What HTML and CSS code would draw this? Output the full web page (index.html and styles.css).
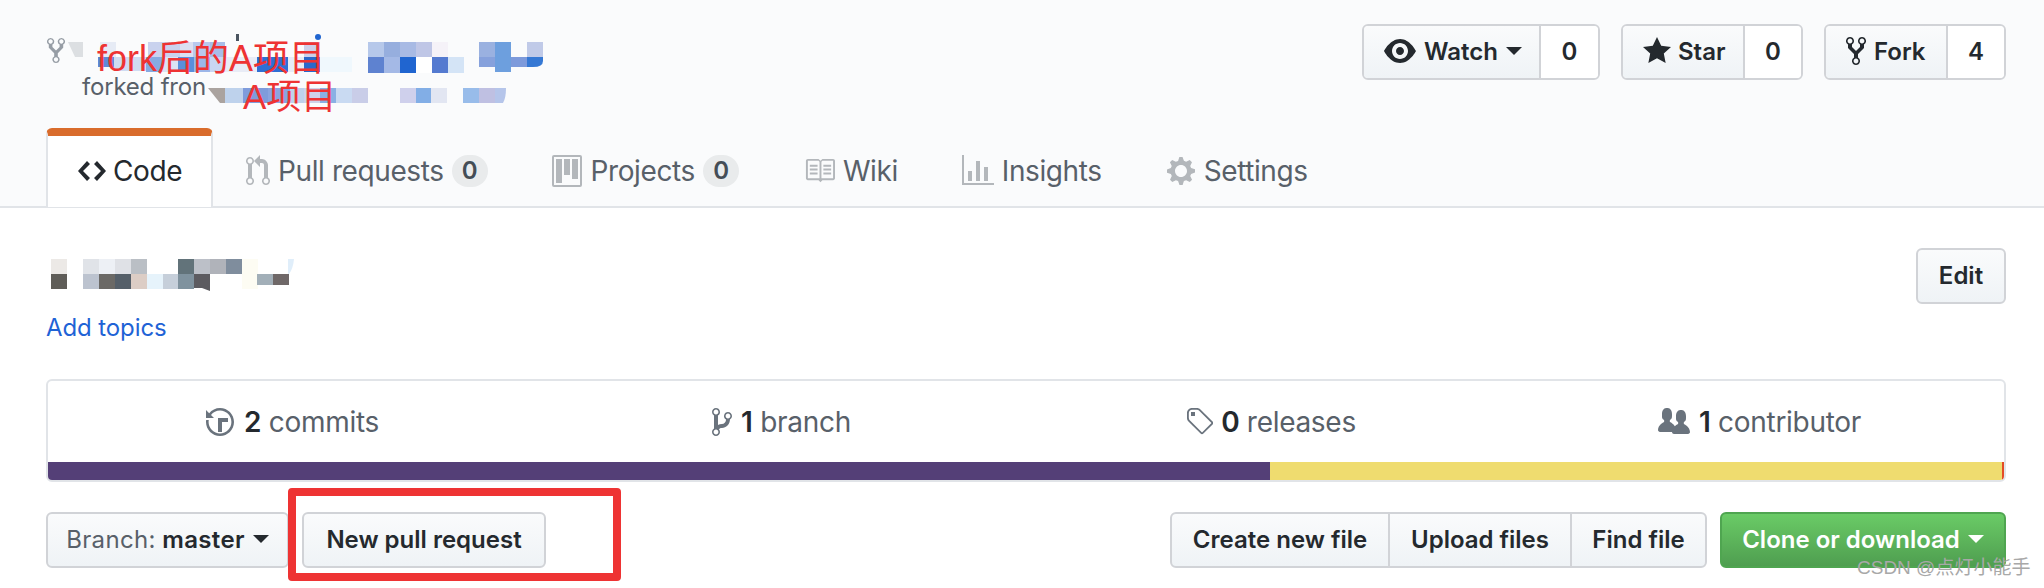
FILE: index.html
```html
<!DOCTYPE html>
<html lang="en">
<head>
<meta charset="utf-8">
<title>Repository</title>
<link rel="stylesheet" href="styles.css">
</head>
<body>
<header class="pagehead">
  <div class="head-top">
    <div class="repo-title">
      <svg class="ico-repo" viewBox="0 0 10 16"><path d="M8 1a1.993 1.993 0 0 0-1 3.72V6L5 8 3 6V4.72A1.993 1.993 0 0 0 2 1a1.993 1.993 0 0 0-1 3.72V6.5l3 3v1.78A1.993 1.993 0 0 0 5 15a1.993 1.993 0 0 0 1-3.72V9.5l3-3V4.72A1.993 1.993 0 0 0 8 1zM2 4.2C1.34 4.2.8 3.65.8 3c0-.65.55-1.2 1.2-1.2.65 0 1.2.55 1.2 1.2 0 .65-.55 1.2-1.2 1.2zm3 10c-.66 0-1.2-.55-1.2-1.2 0-.65.55-1.2 1.2-1.2.65 0 1.2.55 1.2 1.2 0 .65-.55 1.2-1.2 1.2zm3-10c-.66 0-1.2-.55-1.2-1.2 0-.65.55-1.2 1.2-1.2.65 0 1.2.55 1.2 1.2 0 .65-.55 1.2-1.2 1.2z"/></svg>
      <span class="forked">forked fron</span>
    </div>
    <div class="actions">
      <div class="counter-btn">
        <span class="btn-main btn-watch"><svg class="ico-eye" viewBox="0 0 16 16"><path d="M8.06 2C3 2 0 8 0 8s3 6 8.06 6C13 14 16 8 16 8s-3-6-7.94-6zM8 12c-2.2 0-4-1.78-4-4 0-2.2 1.8-4 4-4 2.22 0 4 1.8 4 4 0 2.22-1.78 4-4 4zm2-4c0 1.11-.89 2-2 2-1.11 0-2-.89-2-2 0-1.11.89-2 2-2 1.11 0 2 .89 2 2z"/></svg>Watch<i class="caret"></i></span>
        <span class="btn-count">0</span>
      </div>
      <div class="counter-btn">
        <span class="btn-main btn-star"><svg class="ico-star" viewBox="0 0 14 16"><path d="M14 6l-4.9-.64L7 1 4.9 5.36 0 6l3.6 3.26L2.67 14 7 11.67 11.33 14l-.93-4.74L14 6z"/></svg>Star</span>
        <span class="btn-count btn-count-star">0</span>
      </div>
      <div class="counter-btn">
        <span class="btn-main btn-fork"><svg class="ico-fork" viewBox="0 0 10 16"><path d="M8 1a1.993 1.993 0 0 0-1 3.72V6L5 8 3 6V4.72A1.993 1.993 0 0 0 2 1a1.993 1.993 0 0 0-1 3.72V6.5l3 3v1.78A1.993 1.993 0 0 0 5 15a1.993 1.993 0 0 0 1-3.72V9.5l3-3V4.72A1.993 1.993 0 0 0 8 1zM2 4.2C1.34 4.2.8 3.65.8 3c0-.65.55-1.2 1.2-1.2.65 0 1.2.55 1.2 1.2 0 .65-.55 1.2-1.2 1.2zm3 10c-.66 0-1.2-.55-1.2-1.2 0-.65.55-1.2 1.2-1.2.65 0 1.2.55 1.2 1.2 0 .65-.55 1.2-1.2 1.2zm3-10c-.66 0-1.2-.55-1.2-1.2 0-.65.55-1.2 1.2-1.2.65 0 1.2.55 1.2 1.2 0 .65-.55 1.2-1.2 1.2z"/></svg>Fork</span>
        <span class="btn-count btn-count-fork">4</span>
      </div>
    </div>
  </div>
  <nav class="tabs">
    <span class="tab tab-active"><svg class="ico-code" viewBox="0 0 14 16"><path d="M9.5 3L8 4.5 11.5 8 8 11.5 9.5 13 14 8 9.5 3zm-5 0L0 8l4.5 5L6 11.5 2.5 8 6 4.5 4.5 3z"/></svg>Code</span>
    <span class="tab tab-pr"><svg class="ico-pr" viewBox="0 0 12 16"><path d="M11 11.28V5c-.03-.78-.34-1.47-.94-2.06C9.46 2.35 8.78 2.03 8 2H7V0L4 3l3 3V4h1c.27.02.48.11.69.31.21.2.3.42.31.69v6.28A1.993 1.993 0 0 0 10 15a1.993 1.993 0 0 0 1-3.72zm-1 2.92c-.66 0-1.2-.55-1.2-1.2 0-.65.55-1.2 1.2-1.2.65 0 1.2.55 1.2 1.2 0 .65-.55 1.2-1.2 1.2zM4 3c0-1.11-.89-2-2-2a1.993 1.993 0 0 0-1 3.72v6.56A1.993 1.993 0 0 0 2 15a1.993 1.993 0 0 0 1-3.72V4.72c.59-.34 1-.98 1-1.72zm-.8 10c0 .66-.55 1.2-1.2 1.2-.65 0-1.2-.55-1.2-1.2 0-.65.55-1.2 1.2-1.2.65 0 1.2.55 1.2 1.2zM2 4.2C1.34 4.2.8 3.65.8 3c0-.65.55-1.2 1.2-1.2.65 0 1.2.55 1.2 1.2 0 .65-.55 1.2-1.2 1.2z"/></svg>Pull requests<b class="pill">0</b></span>
    <span class="tab tab-projects"><svg class="ico-project" viewBox="0 0 15 16"><path fill-rule="evenodd" d="M10 12h3V2h-3v10zm-4-2h3V2H6v8zm-4 4h3V2H2v12zm-1 1h13V1H1v14zM14 0H1a1 1 0 0 0-1 1v14a1 1 0 0 0 1 1h13a1 1 0 0 0 1-1V1a1 1 0 0 0-1-1z"/></svg>Projects<b class="pill">0</b></span>
    <span class="tab tab-wiki"><svg class="ico-book" viewBox="0 0 16 16"><path d="M3 5h4v1H3V5zm0 3h4V7H3v1zm0 2h4V9H3v1zm11-5h-4v1h4V5zm0 2h-4v1h4V7zm0 2h-4v1h4V9zm2-6v9c0 .55-.45 1-1 1H9.5l-1 1-1-1H2c-.55 0-1-.45-1-1V3c0-.55.45-1 1-1h5.5l1 1 1-1H15c.55 0 1 .45 1 1zm-8 .5L7.5 3H2v9h6V3.5zm7-.5H9.5l-.5.5V12h6V3z"/></svg>Wiki</span>
    <span class="tab tab-insights"><svg class="ico-graph" viewBox="0 0 16 16"><path d="M16 14v1H0V0h1v14h15zM5 13H3V8h2v5zm4 0H7V3h2v10zm4 0h-2V6h2v7z"/></svg>Insights</span>
    <span class="tab tab-settings"><svg class="ico-gear" viewBox="0 0 14 16"><path d="M14 8.77v-1.6l-1.94-.64-.45-1.09.88-1.84-1.13-1.13-1.81.91-1.09-.45-.69-1.92h-1.6l-.63 1.94-1.11.45-1.84-.88-1.13 1.13.91 1.81-.45 1.09L0 7.23v1.59l1.94.64.45 1.09-.88 1.84 1.13 1.13 1.81-.91 1.09.45.69 1.92h1.59l.63-1.94 1.11-.45 1.84.88 1.13-1.13-.92-1.81.47-1.09L14 8.75v.02zM7 11c-1.66 0-3-1.34-3-3s1.34-3 3-3 3 1.34 3 3-1.34 3-3 3z"/></svg>Settings</span>
  </nav>
</header>

<main class="content">
  <section class="meta">
    <div class="meta-text">
      <div class="desc-space"></div>
      <a class="topics">Add topics</a>
    </div>
    <span class="btn btn-edit">Edit</span>
  </section>

  <section class="summary">
    <ul class="stats">
      <li><svg class="ico-history" viewBox="0 0 14 16"><path d="M8 13H6V6h5v2H8v5zM7 1C4.81 1 2.87 2.02 1.59 3.59L0 2v4h4L2.5 4.5C3.55 3.17 5.17 2.3 7 2.3c3.14 0 5.7 2.56 5.7 5.7s-2.56 5.7-5.7 5.7A5.71 5.71 0 0 1 1.3 8c0-.34.03-.67.09-1H.08C.03 7.33 0 7.66 0 8c0 3.86 3.14 7 7 7s7-3.14 7-7-3.14-7-7-7z"/></svg><b>2</b> commits</li>
      <li><svg class="ico-branch" viewBox="0 0 10 16"><path d="M10 5c0-1.11-.89-2-2-2a1.993 1.993 0 0 0-1 3.72v.3c-.02.52-.23.98-.63 1.38-.4.4-.86.61-1.38.63-.83.02-1.48.16-2 .45V4.72a1.993 1.993 0 0 0-1-3.72C.88 1 0 1.89 0 3a2 2 0 0 0 1 1.72v6.56c-.59.35-1 .99-1 1.72 0 1.11.89 2 2 2 1.11 0 2-.89 2-2 0-.53-.2-1-.53-1.36.09-.06.48-.41.59-.47.25-.11.56-.17.94-.17 1.05-.05 1.95-.45 2.75-1.25S8.95 7.77 9 6.73h-.02C9.59 6.37 10 5.73 10 5zM2 1.8c.66 0 1.2.55 1.2 1.2 0 .65-.55 1.2-1.2 1.2C1.35 4.2.8 3.65.8 3c0-.65.55-1.2 1.2-1.2zm0 12.41c-.66 0-1.2-.55-1.2-1.2 0-.65.55-1.2 1.2-1.2.65 0 1.2.55 1.2 1.2 0 .65-.55 1.2-1.2 1.2zm6-8c-.66 0-1.2-.55-1.2-1.2 0-.65.55-1.2 1.2-1.2.65 0 1.2.55 1.2 1.2 0 .65-.55 1.2-1.2 1.2z"/></svg><b>1</b> branch</li>
      <li><svg class="ico-tag" viewBox="0 0 14 16"><path d="M7.73 1.73C7.26 1.26 6.62 1 5.96 1H3.5C2.13 1 1 2.13 1 3.5v2.47c0 .66.27 1.3.73 1.77l6.06 6.06c.39.39 1.02.39 1.41 0l4.59-4.59a.996.996 0 0 0 0-1.41L7.73 1.73zM2.38 7.09c-.31-.3-.47-.7-.47-1.13V3.5c0-.88.72-1.59 1.59-1.59h2.47c.42 0 .83.16 1.13.47l6.14 6.13-4.73 4.73-6.13-6.15zM3.01 3h2v2H3V3h.01z"/></svg><b>0</b> releases</li>
      <li><svg class="ico-org" viewBox="0 0 16 16"><path d="M16 12.999c0 .439-.45 1-1 1H7.995c-.539 0-.994-.447-.995-.999H1c-.54 0-1-.561-1-1 0-2.634 3-4 3-4s.229-.409 0-1c-.841-.621-1.058-.59-1-3 .058-2.419 1.367-3 2.5-3s2.442.58 2.5 3c.058 2.41-.159 2.379-1 3-.229.59 0 1 0 1s1.549.711 2.42 2.088C9.196 9.369 10 8.999 10 8.999s.229-.409 0-1c-.841-.62-1.058-.59-1-3 .058-2.419 1.367-3 2.5-3s2.437.581 2.495 3c.059 2.41-.158 2.38-1 3-.229.59 0 1 0 1s3.005 1.366 3.005 4z"/></svg><b>1</b> contributor</li>
    </ul>
    <div class="langbar"><span class="lang-a"></span><span class="lang-b"></span><span class="lang-c"></span></div>
  </section>

  <section class="filebar">
    <div class="file-left">
      <span class="btn btn-branch"><span class="muted">Branch:</span> master<i class="caret"></i></span>
      <span class="btn btn-pr">New pull request</span>
    </div>
    <div class="file-right">
      <div class="btn-group">
        <span class="btn btn-create">Create new file</span>
        <span class="btn btn-upload">Upload files</span>
        <span class="btn btn-find">Find file</span>
      </div>
      <span class="btn btn-clone">Clone or download<i class="caret"></i></span>
    </div>
  </section>
</main>

<svg class="mosaic" width="2044" height="300" viewBox="0 0 2044 300">
  <path fill="#dcdfe2" d="M68 42h15v15h-8z"/>
  <rect fill="#e6ebf5" x="100" y="42" width="16" height="15"/>
  <rect fill="#c9d2ee" x="148" y="42" width="32" height="15"/>
  <rect fill="#dbe0f2" x="180" y="42" width="32" height="15"/>
  <rect fill="#b9c9ee" x="193" y="42" width="17" height="15"/>
  <rect fill="#a8bde8" x="210" y="42" width="15" height="15"/>
  <rect fill="#e8ecf6" x="225" y="57" width="32" height="15"/>
  <rect fill="#5f8ad8" x="98" y="57" width="16" height="10"/>
  <rect fill="#cfdcf2" x="114" y="57" width="32" height="14"/>
  <rect fill="#86aae2" x="146" y="57" width="16" height="15"/>
  <rect fill="#dbe4f5" x="162" y="57" width="16" height="15"/>
  <rect fill="#5a8fdc" x="178" y="57" width="16" height="15"/>
  <rect fill="#9cb6e8" x="194" y="57" width="16" height="15"/>
  <rect fill="#c9d6f2" x="210" y="57" width="15" height="15"/>
  <rect fill="#2f6fd4" x="257" y="57" width="31" height="15"/>
  <rect fill="#e6ecf6" x="288" y="57" width="16" height="15"/>
  <rect fill="#cdd0ea" x="304" y="42" width="16" height="15"/>
  <rect fill="#2a68cc" x="304" y="57" width="16" height="15"/>
  <rect fill="#f0f8fd" x="320" y="57" width="32" height="15"/>
  <rect fill="#b6c8ea" x="368" y="42" width="16" height="15"/>
  <rect fill="#96aede" x="384" y="42" width="16" height="15"/>
  <rect fill="#a8bae4" x="400" y="42" width="16" height="15"/>
  <rect fill="#bfc6e6" x="416" y="42" width="16" height="15"/>
  <rect fill="#f5f2f8" x="432" y="42" width="16" height="15"/>
  <rect fill="#9ab1e0" x="479" y="42" width="16" height="15"/>
  <rect fill="#6d9fde" x="495" y="42" width="16" height="30"/>
  <rect fill="#c0cae8" x="527" y="42" width="16" height="15"/>
  <rect fill="#5e82d0" x="368" y="57" width="16" height="16"/>
  <rect fill="#a4b9e6" x="384" y="57" width="16" height="16"/>
  <rect fill="#2065d0" x="400" y="57" width="16" height="16"/>
  <rect fill="#ffffff" x="416" y="57" width="16" height="16"/>
  <rect fill="#547ad0" x="432" y="57" width="16" height="16"/>
  <rect fill="#d4e4f6" x="448" y="57" width="16" height="16"/>
  <rect fill="#86a1dc" x="479" y="57" width="16" height="10"/>
  <rect fill="#7d9adb" x="511" y="57" width="16" height="10"/>
  <path fill="#3578d4" d="M527 57h16v4q0 6-10 6h-6z"/>
  <path fill="#aaa39f" d="M208 88h17v15h-5z"/>
  <rect fill="#bed2ec" x="225" y="88" width="18" height="15"/>
  <rect fill="#7f9cdc" x="243" y="88" width="25" height="15"/>
  <rect fill="#8aa4e0" x="268" y="88" width="22" height="15"/>
  <rect fill="#bed2ec" x="290" y="88" width="14" height="15"/>
  <rect fill="#cfd3ea" x="304" y="88" width="16" height="15"/>
  <rect fill="#8ab0e4" x="320" y="88" width="16" height="15"/>
  <rect fill="#c9daf2" x="336" y="88" width="16" height="15"/>
  <rect fill="#c9cde8" x="352" y="88" width="16" height="15"/>
  <rect fill="#cfd0ec" x="400" y="88" width="16" height="15"/>
  <rect fill="#82aee6" x="416" y="88" width="15" height="15"/>
  <rect fill="#e2e6f2" x="431" y="88" width="16" height="15"/>
  <rect fill="#98bcea" x="463" y="88" width="16" height="15"/>
  <rect fill="#bfc0e2" x="479" y="88" width="16" height="15"/>
  <path fill="#b5c5ea" d="M495 88h11q0 10-3 15h-8z"/>
  <rect fill="#4a5560" x="236" y="34" width="3" height="7"/>
  <circle fill="#2065d0" cx="318" cy="37" r="3"/>
  <rect fill="#ece9e6" x="51" y="259" width="16" height="15"/>
  <rect fill="#5f5d58" x="51" y="274" width="16" height="15"/>
  <rect fill="#e0e3e8" x="83" y="259" width="16" height="15"/>
  <rect fill="#edf0f5" x="99" y="259" width="16" height="15"/>
  <rect fill="#dfe1e6" x="115" y="259" width="16" height="15"/>
  <rect fill="#babfc5" x="131" y="259" width="16" height="15"/>
  <rect fill="#62737a" x="178" y="259" width="16" height="15"/>
  <rect fill="#bcc0c8" x="194" y="259" width="16" height="15"/>
  <rect fill="#b0b3ba" x="210" y="259" width="16" height="15"/>
  <rect fill="#7f8d9d" x="226" y="259" width="16" height="15"/>
  <rect fill="#fdfcf3" x="242" y="259" width="16" height="30"/>
  <path fill="#e0eefa" d="M288 259h6q-1 10-5 15h-1z"/>
  <rect fill="#bcc3cf" x="83" y="274" width="16" height="15"/>
  <rect fill="#6b6966" x="99" y="274" width="16" height="15"/>
  <rect fill="#555f69" x="115" y="274" width="16" height="15"/>
  <rect fill="#dccdc5" x="131" y="274" width="16" height="15"/>
  <rect fill="#e6f3fb" x="147" y="274" width="16" height="15"/>
  <rect fill="#c6cfda" x="163" y="274" width="15" height="15"/>
  <rect fill="#7f929e" x="178" y="274" width="16" height="15"/>
  <path fill="#5c5b60" d="M194 274h16v17l-8-3h-8z"/>
  <rect fill="#a2afb8" x="257" y="274" width="16" height="11"/>
  <rect fill="#6f6868" x="273" y="274" width="16" height="11"/>
</svg>
<span class="note note-one">fork后的A项目</span>
<span class="note note-two">A项目</span>
<div class="redbox"></div>
<span class="watermark">CSDN @点灯小能手</span>
</body>
</html>
```
FILE: styles.css
```css
* { box-sizing: border-box; }
html, body { margin: 0; padding: 0; }
body {
  position: relative;
  width: 2044px;
  height: 588px;
  overflow: hidden;
  background: #fff;
  color: #24292e;
  font-family: Inter, "Liberation Sans", sans-serif;
  font-size: 28px;
}
svg { fill: currentColor; flex: none; display: block; }

.pagehead {
  height: 208px;
  padding: 24px 38px 0 46px;
  background: #fafbfc;
  border-bottom: 2px solid #e1e4e8;
}
.head-top { display: flex; justify-content: space-between; height: 104px; }
.repo-title { position: relative; flex: 1; padding-top: 12px; color: #586069; }
.ico-repo { width: 18px; height: 29px; color: #969da5; margin-left: 1px; }
.forked { display: block; margin: 10px 0 0 36px; font-size: 24px; line-height: 24px; letter-spacing: -.2px; }

.actions { display: flex; gap: 21px; height: 56px; }
.counter-btn {
  display: flex;
  border: 2px solid #d1d3d7;
  border-radius: 6px;
  font-size: 24px;
  font-weight: 600;
  overflow: hidden;
}
.btn-main {
  display: flex;
  align-items: center;
  padding-bottom: 2px;
  background: linear-gradient(#fafbfc, #eff3f6);
  border-right: 2px solid #d1d3d7;
}
.btn-watch { width: 177px; padding-left: 20px; }
.btn-star { width: 122px; padding-left: 20px; }
.btn-fork { width: 122px; padding-left: 20px; }
.btn-count { display: flex; align-items: center; justify-content: center; padding-bottom: 2px; background: #fff; width: 57px; }
.btn-count-star { width: 56px; }
.btn-count-fork { width: 56px; }
.ico-eye { width: 32px; height: 32px; margin-right: 8px; }
.ico-star { width: 28px; height: 32px; margin-right: 7px; }
.ico-fork { width: 20px; height: 32px; margin-right: 8px; }
.caret {
  display: inline-block;
  width: 0;
  height: 0;
  margin-left: 8px;
  border: 8px solid transparent;
  border-top-color: currentColor;
  border-bottom-width: 0;
}

.tabs { display: flex; height: 79px; }
.tab {
  display: flex;
  align-items: center;
  height: 79px;
  padding-top: 6px;
  color: #586069;
  letter-spacing: -.4px;
  white-space: nowrap;
}
.tab svg { color: #b3b7bb; }
.tab-active {
  width: 167px;
  padding: 0 0 2px 30px;
  color: #24292e;
  background: #fff;
  border: 2px solid #e1e4e8;
  border-top: 8px solid #d96c2c;
  border-bottom: 0;
  border-radius: 6px 6px 0 0;
}
.tab-active svg { color: #24292e; width: 28px; height: 32px; margin-right: 7px; }
.tab-pr { margin-left: 33px; }
.tab-projects { margin-left: 64px; }
.tab-wiki { margin-left: 65px; }
.tab-insights { margin-left: 64px; }
.tab-settings { margin-left: 65px; }
.ico-pr { width: 24px; height: 32px; margin-right: 8px; }
.ico-project { width: 30px; height: 32px; margin-right: 9px; }
.ico-book { width: 31px; height: 31px; margin-right: 8px; }
.ico-graph { width: 32px; height: 32px; margin-right: 8px; }
.ico-gear { width: 28px; height: 32px; margin-right: 9px; }
.pill {
  display: flex;
  align-items: center;
  justify-content: center;
  width: 36px;
  height: 32px;
  margin-left: 8px;
  border-radius: 16px;
  background: #e9ebec;
  color: #444d56;
  font-size: 24px;
  font-weight: 600;
}

.content { padding: 0 38px 0 46px; }
.meta { display: flex; justify-content: space-between; height: 171px; padding-top: 40px; }
.desc-space { height: 65px; }
.topics { display: block; font-size: 24px; line-height: 30px; letter-spacing: -.1px; color: #1f63d6; }
.btn {
  display: inline-flex;
  align-items: center;
  justify-content: center;
  height: 56px;
  padding-bottom: 2px;
  border: 2px solid #d1d3d7;
  border-radius: 6px;
  background: linear-gradient(#fafbfc, #eff3f6);
  font-size: 24px;
  font-weight: 600;
  white-space: pre;
}
.btn-edit { width: 90px; }

.summary {
  height: 103px;
  border: 2px solid #e1e4e8;
  border-radius: 6px;
  overflow: hidden;
}
.stats {
  display: flex;
  height: 81px;
  margin: 0;
  padding: 1px 0 0;
  list-style: none;
}
.stats li {
  flex: 1;
  display: flex;
  align-items: center;
  justify-content: center;
  color: #586069;
  letter-spacing: -.3px;
  white-space: pre;
}
.stats li svg { color: #6a737d; }
.stats b { color: #24292e; font-weight: 600; }
.ico-history { width: 28px; height: 32px; margin-right: 10px; }
.ico-branch { width: 20px; height: 32px; margin-right: 9px; }
.ico-tag { width: 28px; height: 32px; margin-right: 8px; }
.ico-org { width: 32px; height: 32px; margin-right: 9px; }
.langbar { display: flex; height: 18px; }
.lang-a { width: 1222px; background: #543f77; }
.lang-b { flex: 1; background: #efdc6f; }
.lang-c { width: 2px; background: #e34c26; }

.filebar { display: flex; justify-content: space-between; margin-top: 30px; }
.file-left, .file-right { display: flex; }
.btn-branch { width: 243px; letter-spacing: .35px; }
.muted { color: #586069; font-weight: 400; }
.btn-pr { width: 244px; margin-left: 13px; }
.btn-group { display: flex; }
.btn-create { width: 220px; border-radius: 6px 0 0 6px; }
.btn-upload { width: 184px; margin-left: -2px; border-radius: 0; }
.btn-find { width: 137px; margin-left: -2px; border-radius: 0 6px 6px 0; }
.btn-clone {
  width: 286px;
  margin-left: 13px;
  color: #fff;
  border-color: #4fa550;
  background: linear-gradient(#6acb66, #4f9e50);
}

.mosaic { position: absolute; left: 0; top: 0; }
.note {
  position: absolute;
  color: #ee3333;
  font-family: "Liberation Sans", "Noto Sans CJK SC", sans-serif;
  font-size: 36px;
  line-height: 32px;
  white-space: nowrap;
}
.note-one { left: 97px; top: 43px; }
.note-two { left: 243px; top: 81px; font-size: 35px; }
.redbox {
  position: absolute;
  left: 288px;
  top: 488px;
  width: 333px;
  height: 93px;
  border: 8px solid #ee3333;
  border-radius: 4px;
}
.watermark {
  position: absolute;
  left: 1857px;
  top: 556px;
  color: #a8a8a8;
  font-family: "Liberation Sans", "Noto Sans CJK SC", sans-serif;
  font-size: 19px;
  line-height: 24px;
  white-space: nowrap;
}
```
